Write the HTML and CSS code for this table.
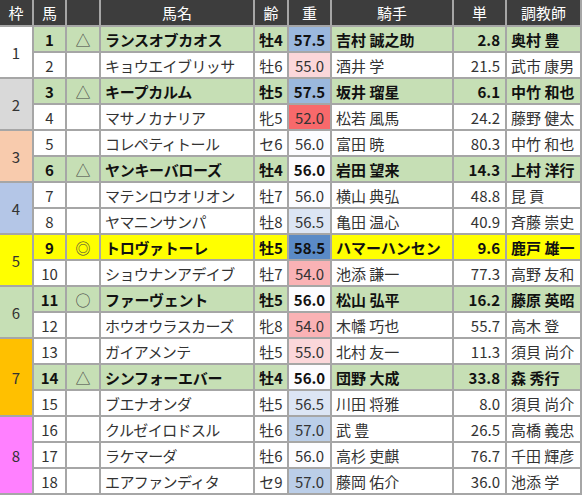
FILE: index.html
```html
<!DOCTYPE html>
<html lang="ja">
<head>
<meta charset="utf-8">
<title>出馬表</title>
<link rel="stylesheet" href="styles.css">
</head>
<body>
<div class="sheet">
  <div class="row head">
    <div class="cell">枠</div><div class="cell">馬</div><div class="cell"></div><div class="cell">馬名</div><div class="cell">齢</div><div class="cell">重</div><div class="cell">騎手</div><div class="cell">単</div><div class="cell">調教師</div>
  </div>

  <div class="row hl">
    <div class="cell waku span2 f1">1</div>
    <div class="cell c">1</div><div class="cell c mk">△</div><div class="cell l nm">ランスオブカオス</div><div class="cell c">牡4</div><div class="cell c w575">57.5</div><div class="cell l">吉村 誠之助</div><div class="cell r">2.8</div><div class="cell l">奥村 豊</div>
  </div>
  <div class="row">
    <div class="cell c">2</div><div class="cell c mk"></div><div class="cell l nm">キョウエイブリッサ</div><div class="cell c">牡6</div><div class="cell c w550">55.0</div><div class="cell l">酒井 学</div><div class="cell r">21.5</div><div class="cell l">武市 康男</div>
  </div>

  <div class="row hl">
    <div class="cell waku span2 f2">2</div>
    <div class="cell c">3</div><div class="cell c mk">△</div><div class="cell l nm">キープカルム</div><div class="cell c">牡5</div><div class="cell c w575">57.5</div><div class="cell l">坂井 瑠星</div><div class="cell r">6.1</div><div class="cell l">中竹 和也</div>
  </div>
  <div class="row">
    <div class="cell c">4</div><div class="cell c mk"></div><div class="cell l nm">マサノカナリア</div><div class="cell c">牝5</div><div class="cell c w520">52.0</div><div class="cell l">松若 風馬</div><div class="cell r">24.2</div><div class="cell l">藤野 健太</div>
  </div>

  <div class="row">
    <div class="cell waku span2 f3">3</div>
    <div class="cell c">5</div><div class="cell c mk"></div><div class="cell l nm">コレペティトール</div><div class="cell c">セ6</div><div class="cell c w560">56.0</div><div class="cell l">富田 暁</div><div class="cell r">80.3</div><div class="cell l">中竹 和也</div>
  </div>
  <div class="row hl">
    <div class="cell c">6</div><div class="cell c mk">△</div><div class="cell l nm">ヤンキーバローズ</div><div class="cell c">牡4</div><div class="cell c w560">56.0</div><div class="cell l">岩田 望来</div><div class="cell r">14.3</div><div class="cell l">上村 洋行</div>
  </div>

  <div class="row">
    <div class="cell waku span2 f4">4</div>
    <div class="cell c">7</div><div class="cell c mk"></div><div class="cell l nm">マテンロウオリオン</div><div class="cell c">牡7</div><div class="cell c w560">56.0</div><div class="cell l">横山 典弘</div><div class="cell r">48.8</div><div class="cell l">昆 貢</div>
  </div>
  <div class="row">
    <div class="cell c">8</div><div class="cell c mk"></div><div class="cell l nm">ヤマニンサンパ</div><div class="cell c">牡8</div><div class="cell c w565">56.5</div><div class="cell l">亀田 温心</div><div class="cell r">40.9</div><div class="cell l">斉藤 崇史</div>
  </div>

  <div class="row yl">
    <div class="cell waku span2 f5">5</div>
    <div class="cell c">9</div><div class="cell c mk">◎</div><div class="cell l nm">トロヴァトーレ</div><div class="cell c">牡5</div><div class="cell c w585">58.5</div><div class="cell l">ハマーハンセン</div><div class="cell r">9.6</div><div class="cell l">鹿戸 雄一</div>
  </div>
  <div class="row">
    <div class="cell c">10</div><div class="cell c mk"></div><div class="cell l nm">ショウナンアデイブ</div><div class="cell c">牡7</div><div class="cell c w540">54.0</div><div class="cell l">池添 謙一</div><div class="cell r">77.3</div><div class="cell l">高野 友和</div>
  </div>

  <div class="row hl">
    <div class="cell waku span2 f6">6</div>
    <div class="cell c">11</div><div class="cell c mk">○</div><div class="cell l nm">ファーヴェント</div><div class="cell c">牡5</div><div class="cell c w560">56.0</div><div class="cell l">松山 弘平</div><div class="cell r">16.2</div><div class="cell l">藤原 英昭</div>
  </div>
  <div class="row">
    <div class="cell c">12</div><div class="cell c mk"></div><div class="cell l nm">ホウオウラスカーズ</div><div class="cell c">牝8</div><div class="cell c w540">54.0</div><div class="cell l">木幡 巧也</div><div class="cell r">55.7</div><div class="cell l">高木 登</div>
  </div>

  <div class="row">
    <div class="cell waku span3 f7">7</div>
    <div class="cell c">13</div><div class="cell c mk"></div><div class="cell l nm">ガイアメンテ</div><div class="cell c">牡5</div><div class="cell c w550">55.0</div><div class="cell l">北村 友一</div><div class="cell r">11.3</div><div class="cell l">須貝 尚介</div>
  </div>
  <div class="row hl">
    <div class="cell c">14</div><div class="cell c mk">△</div><div class="cell l nm">シンフォーエバー</div><div class="cell c">牡4</div><div class="cell c w560">56.0</div><div class="cell l">団野 大成</div><div class="cell r">33.8</div><div class="cell l">森 秀行</div>
  </div>
  <div class="row">
    <div class="cell c">15</div><div class="cell c mk"></div><div class="cell l nm">ブエナオンダ</div><div class="cell c">牡5</div><div class="cell c w565">56.5</div><div class="cell l">川田 将雅</div><div class="cell r">8.0</div><div class="cell l">須貝 尚介</div>
  </div>

  <div class="row">
    <div class="cell waku span3 f8">8</div>
    <div class="cell c">16</div><div class="cell c mk"></div><div class="cell l nm">クルゼイロドスル</div><div class="cell c">牡6</div><div class="cell c w570">57.0</div><div class="cell l">武 豊</div><div class="cell r">26.5</div><div class="cell l">高橋 義忠</div>
  </div>
  <div class="row">
    <div class="cell c">17</div><div class="cell c mk"></div><div class="cell l nm">ラケマーダ</div><div class="cell c">牡6</div><div class="cell c w560">56.0</div><div class="cell l">高杉 吏麒</div><div class="cell r">76.7</div><div class="cell l">千田 輝彦</div>
  </div>
  <div class="row">
    <div class="cell c">18</div><div class="cell c mk"></div><div class="cell l nm">エアファンディタ</div><div class="cell c">セ9</div><div class="cell c w570">57.0</div><div class="cell l">藤岡 佑介</div><div class="cell r">36.0</div><div class="cell l">池添 学</div>
  </div>
</div>
</body>
</html>
```

FILE: styles.css
```css
html, body {
  margin: 0;
  padding: 0;
  background: #ffffff;
}

.sheet {
  display: grid;
  grid-template-columns: 32px 31px 32px 152px 32px 41px 120px 51px 73px;
  grid-template-rows: 25px repeat(18, 24px);
  gap: 2px;
  width: 580px;
  padding: 0 2px 2px 0;
  background: #a6a6a6;
  font-family: "Noto Sans CJK JP", "Noto Sans", sans-serif;
  font-size: 15px;
  color: #333333;
}

.row {
  display: contents;
}

.cell {
  background: #ffffff;
  display: flex;
  align-items: center;
  white-space: nowrap;
  overflow: hidden;
  line-height: 1;
}

.head .cell {
  background: #3d3d3d;
  color: #ffffff;
  justify-content: center;
}

.c { justify-content: center; }
.l { justify-content: flex-start; padding-left: 4px; }
.r { justify-content: flex-end; padding-right: 5px; }

.nm { letter-spacing: -0.6px; }

.mk { font-weight: normal; color: #444444; }

.hl > .cell { background: #c6dfb5; }
.yl > .cell { background: #ffff00; }
.hl > .cell:not(.mk), .yl > .cell:not(.mk) { font-weight: bold; color: #111111; }
.hl > .nm, .yl > .nm { letter-spacing: -0.3px; }

.waku {
  grid-column: 1;
  justify-content: center;
  font-weight: normal !important;
  color: #333333 !important;
}
.span2 { grid-row: span 2; }
.span3 { grid-row: span 3; }

.row > .f1 { background: #ffffff; }
.row > .f2 { background: #d9d9d9; }
.row > .f3 { background: #f8cbad; }
.row > .f4 { background: #b4c6e7; }
.row > .f5 { background: #ffff00; }
.row > .f6 { background: #c6dfb5; }
.row > .f7 { background: #ffc000; }
.row > .f8 { background: #ff80ff; }

.row > .w520 { background: #f8696b; }
.row > .w540 { background: #fab2b5; }
.row > .w550 { background: #fbd7da; }
.row > .w560 { background: #fcfcff; }
.row > .w565 { background: #dce5f4; }
.row > .w570 { background: #bbcee8; }
.row > .w575 { background: #9bb8dd; }
.row > .w585 { background: #5a8ac6; }
```
